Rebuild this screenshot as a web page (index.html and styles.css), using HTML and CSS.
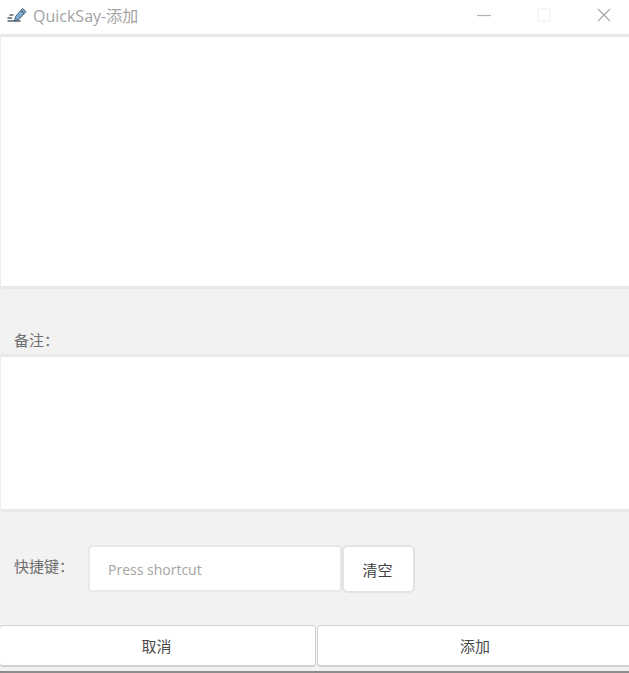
FILE: index.html
```html
<!DOCTYPE html>
<html lang="zh">
<head>
<meta charset="utf-8">
<title>QuickSay-添加</title>
<link rel="stylesheet" href="styles.css">
</head>
<body>
<div class="window">
  <header class="titlebar">
    <svg class="app-icon" viewBox="0 0 20 16" width="20" height="16">
      <path d="M2.500 8h4M0.500 11h4.500M0.500 14h13" stroke="#55606c" stroke-width="1.300" fill="none"/>
      <path d="M7.500 14l1-4.500 7-8 3.500 3-7 7.800z" fill="#7ea9cf" stroke="#4f6274" stroke-width="1"/>
      <path d="M14 3.500l3.200 3" stroke="#39485a" stroke-width="1"/>
    </svg>
    <span class="title">QuickSay-添加</span>
    <div class="controls">
      <svg class="ctl ctl-min" viewBox="0 0 14 14" width="14" height="14"><path d="M0 7.500h14" stroke="#b4b4b4" stroke-width="1.300"/></svg>
      <svg class="ctl ctl-max" viewBox="0 0 14 14" width="14" height="14"><rect x="1" y="1" width="12" height="12" fill="none" stroke="#f0f0f0" stroke-width="1"/></svg>
      <svg class="ctl ctl-close" viewBox="0 0 14 14" width="14" height="14"><path d="M1 1l12 12M13 1L1 13" stroke="#a6a6a6" stroke-width="1.100"/></svg>
    </div>
  </header>
  <main class="content">
    <div class="editor editor-main"></div>
    <label class="note-label">备注：</label>
    <div class="editor editor-note"></div>
    <div class="shortcut-row">
      <span class="shortcut-label">快捷键：</span>
      <div class="shortcut-input">Press shortcut</div>
      <button class="clear-btn">清空</button>
    </div>
    <div class="actions">
      <button class="action action-cancel">取消</button>
      <button class="action action-add">添加</button>
    </div>
  </main>
  <div class="bottom-line"></div>
</div>
</body>
</html>
```
FILE: styles.css
```css
* { box-sizing: border-box; }
html, body { margin: 0; padding: 0; }
body {
  width: 629px;
  height: 673px;
  overflow: hidden;
  background: #f2f2f2;
  font-family: "Open Sans", "Noto Sans CJK SC", sans-serif;
}
.window { display: flex; flex-direction: column; height: 673px; }
.titlebar {
  height: 34px;
  background: #fff;
  display: flex;
  align-items: center;
  padding-left: 7px;
  flex: none;
}
.app-icon { margin-right: 6px; margin-top: -4px; }
.title {
  font-size: 16px;
  color: #a3a3a3;
  margin-top: -4px;
}
.controls {
  margin-left: auto;
  display: flex;
  align-items: center;
  gap: 46px;
  padding-right: 18px;
  margin-top: -4px;
}
.content { flex: 1; display: flex; flex-direction: column; }
.editor {
  background: #fff;
  border: 3px solid #e8e8e8;
  border-left: 1px solid #ececec;
  border-radius: 3px;
  margin: 0 -4px 0 0;
}
.editor-main { height: 255px; }
.note-label {
  margin: 42px 0 4px 14px;
  height: 19px;
  line-height: 19px;
  font-size: 15px;
  color: #6e6e6e;
}
.editor-note { height: 158px; }
.shortcut-row {
  display: flex;
  align-items: flex-start;
  margin-top: 33px;
  height: 49px;
}
.shortcut-label {
  width: 88px;
  padding-left: 14px;
  font-size: 15px;
  line-height: 19px;
  margin-top: 12px;
  color: #6e6e6e;
}
.shortcut-input {
  width: 254px;
  height: 47px;
  background: #fff;
  border: 2px solid #e8e8e8;
  border-radius: 4px;
  padding: 0 18px;
  line-height: 46px;
  font-size: 14px;
  color: #a4a4a4;
}
.clear-btn {
  width: 73px;
  height: 48px;
  margin: 0;
  background: #fff;
  border: 2px solid #e3e3e3;
  border-radius: 6px;
  font: inherit;
  font-size: 15px;
  color: #3f3f3f;
  padding: 0 2px 0 0;
}
.actions {
  display: flex;
  gap: 1px;
  margin-top: 31px;
  height: 42px;
}
.action {
  background: #fff;
  border: 1px solid #d2d2d2;
  border-bottom-width: 2px;
  border-radius: 4px;
  font: inherit;
  font-size: 15px;
  color: #4a4a4a;
  padding: 0;
}
.action-cancel { width: 317px; margin-left: -1px; padding-right: 2px; }
.action-add { flex: 1; margin-right: -4px; }
.bottom-line {
  height: 2px;
  background: #8c8c8c;
  flex: none;
}
```
